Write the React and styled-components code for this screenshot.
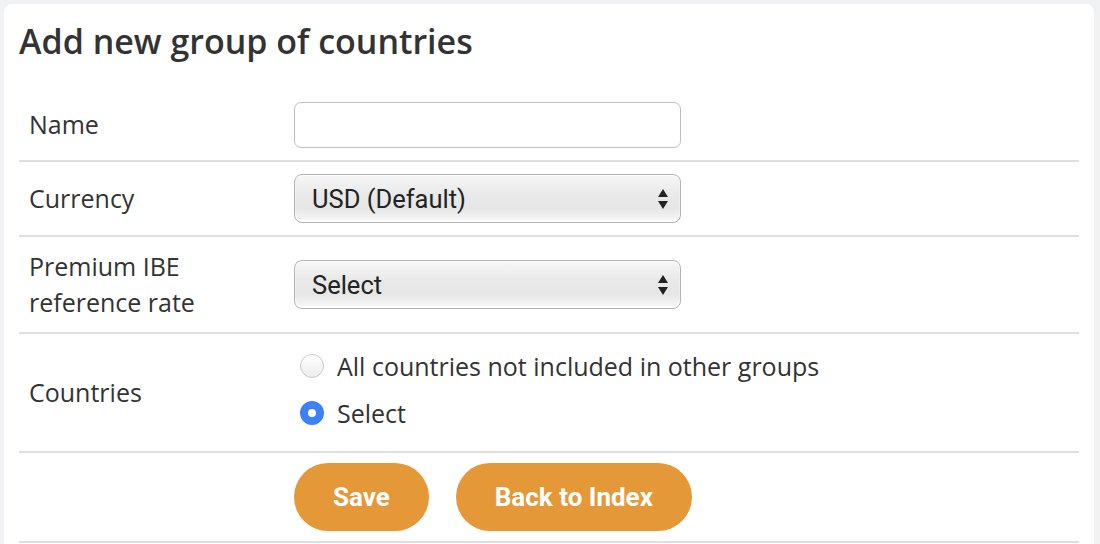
import React from 'react';
import styled, { createGlobalStyle } from 'styled-components';

const GlobalStyle = createGlobalStyle`
  html, body { margin: 0; padding: 0; background: #f1f2f4; }
  body { font-family: "Open Sans", Lato, sans-serif; color: #333; }
  * { box-sizing: border-box; }
`;

const Page = styled.div`
  height: 544px;
  overflow: hidden;
  padding: 4px 6px 0 4px;
`;

const Card = styled.div`
  background: #fff;
  border-radius: 8px;
  padding: 16px 15px 30px;
`;

const Title = styled.h1`
  margin: 0 0 27px;
  font-size: 34px;
  font-weight: 600;
  line-height: 43px;
  color: #333;
`;

const Row = styled.div`
  display: grid;
  grid-template-columns: 265px 1fr;
  border-bottom: 2px solid #dfdfe3;
`;

const Label = styled.div`
  padding: ${p => p.$pad || '12px'} 10px;
  font-size: 25px;
  line-height: 35.5px;
  color: #333;
  display: flex;
  align-items: center;
`;

const Field = styled.div`
  padding: ${p => p.$pad || '12px 10px'};
  display: flex;
  align-items: center;
  gap: ${p => p.$gap || '0'};
`;

const TextInput = styled.input`
  width: 387px;
  height: 46px;
  border: 1px solid #bdbdbd;
  border-radius: 7px;
  background: #fff;
  font-size: 24px;
  padding: 0 14px;
  outline: none;
`;

const SelectWrap = styled.div`
  position: relative;
  width: 387px;
  height: 49px;
`;

const Select = styled.select`
  appearance: none;
  -webkit-appearance: none;
  width: 100%;
  height: 100%;
  border: 1px solid #b3b3b3;
  border-radius: 8px;
  background: linear-gradient(to bottom, #f7f7f7 0%, #e9e9e9 40%, #e6e6e6 70%, #f3f3f3 92%, #fbfbfb 100%);
  box-shadow: inset 0 1px 1px rgba(255,255,255,0.9), inset 0 -2px 2px rgba(255,255,255,0.8);
  font-family: Roboto, "Liberation Sans", sans-serif;
  font-size: 25.5px;
  color: #222;
  padding: 0 40px 0 17px;
  outline: none;
`;

const Arrows = styled.svg`
  position: absolute;
  right: 13px;
  top: 50%;
  transform: translateY(-50%);
  pointer-events: none;
`;

const RadioGroup = styled.div`
  display: flex;
  flex-direction: column;
  padding-left: 6px;
`;

const RadioOption = styled.label`
  display: flex;
  align-items: center;
  gap: 13px;
  height: 47px;
  font-size: 25px;
  color: #333;
`;

const Radio = styled.input`
  appearance: none;
  -webkit-appearance: none;
  margin: 0;
  width: 24px;
  height: 24px;
  border-radius: 50%;
  border: 1px solid #c9c9c9;
  background: linear-gradient(to bottom, #ffffff, #ececec);
  &:checked {
    border: 8px solid #3a82f6;
    background: #fff;
  }
`;

const Button = styled.button`
  height: 68px;
  padding: 0 39px;
  border: none;
  border-radius: 34px;
  background: #e59837;
  color: #fff;
  font-family: Roboto, "Liberation Sans", sans-serif;
  font-weight: 700;
  font-size: 26px;
  cursor: pointer;
`;

function SelectBox({ value, options }) {
  return (
    <SelectWrap>
      <Select defaultValue={value}>
        {options.map(o => <option key={o}>{o}</option>)}
      </Select>
      <Arrows width="10" height="20" viewBox="0 0 10 20">
        <polygon points="5,0 10,8 0,8" fill="#222" />
        <polygon points="0,12 10,12 5,20" fill="#222" />
      </Arrows>
    </SelectWrap>
  );
}

export default function App() {
  return (
    <>
      <GlobalStyle />
      <Page>
        <Card>
          <Title>Add new group of countries</Title>
          <Row>
            <Label>Name</Label>
            <Field><TextInput type="text" /></Field>
          </Row>
          <Row>
            <Label>Currency</Label>
            <Field><SelectBox value="USD (Default)" options={['USD (Default)', 'EUR', 'GBP']} /></Field>
          </Row>
          <Row>
            <Label>Premium IBE<br />reference rate</Label>
            <Field><SelectBox value="Select" options={['Select']} /></Field>
          </Row>
          <Row>
            <Label>Countries</Label>
            <Field $pad="8px 10px 15px">
              <RadioGroup>
                <RadioOption><Radio type="radio" name="countries" />All countries not included in other groups</RadioOption>
                <RadioOption><Radio type="radio" name="countries" defaultChecked />Select</RadioOption>
              </RadioGroup>
            </Field>
          </Row>
          <Row>
            <Label $pad="10px" />
            <Field $pad="10px" $gap="27px">
              <Button>Save</Button>
              <Button>Back to Index</Button>
            </Field>
          </Row>
        </Card>
      </Page>
    </>
  );
}
